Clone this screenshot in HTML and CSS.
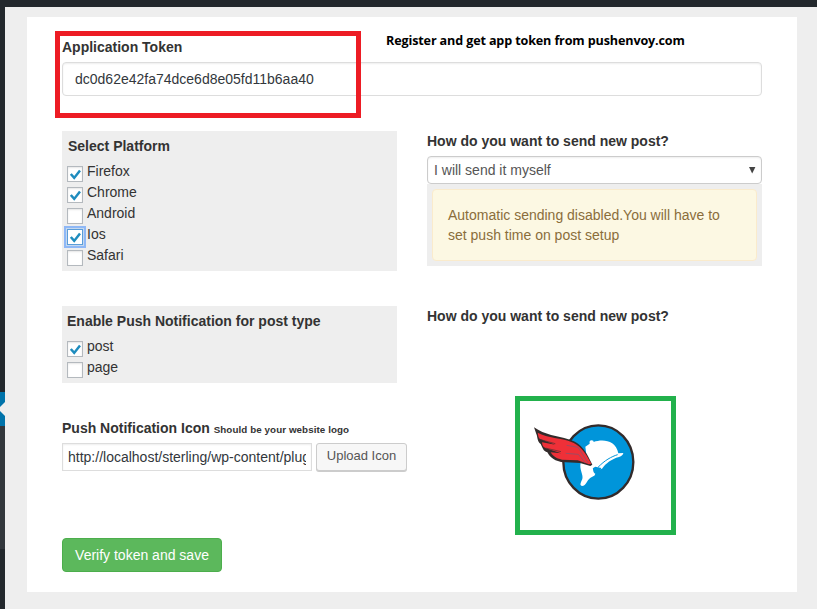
FILE: index.html
```html
<!DOCTYPE html>
<html lang="en">
<head>
<meta charset="utf-8">
<title>Push Envoy settings</title>
<link rel="stylesheet" href="styles.css">
</head>
<body>
<header class="topbar"></header>
<div class="shell">
  <nav class="sidebar"><div class="current"><i></i></div><div class="submenu"></div></nav>
  <main class="card">
    <section class="token">
      <div class="token-head"><label class="label" for="token">Application Token</label><span class="note">Register and get app token from pushenvoy.com</span></div>
      <input id="token" class="token-input" type="text" value="dc0d62e42fa74dce6d8e05fd11b6aa40">
      <div class="highlight"></div>
    </section>
    <div class="grid">
      <section class="panel platforms">
        <h2 class="label">Select Platform</h2>
        <label class="check"><span class="box on"><svg viewBox="0 0 14 14"><path d="M2.8 7 6.2 10.9 12 3.4"/></svg></span>Firefox</label>
        <label class="check"><span class="box on"><svg viewBox="0 0 14 14"><path d="M2.8 7 6.2 10.9 12 3.4"/></svg></span>Chrome</label>
        <label class="check"><span class="box"></span>Android</label>
        <label class="check"><span class="box on focus"><svg viewBox="0 0 14 14"><path d="M2.8 7 6.2 10.9 12 3.4"/></svg></span>Ios</label>
        <label class="check"><span class="box"></span>Safari</label>
      </section>
      <section class="send">
        <h2 class="label">How do you want to send new post?</h2>
        <div class="select"><span>I will send it myself</span><svg width="7" height="7" viewBox="0 0 7 7"><path d="M0 0h6.4L3.2 6.5z"/></svg></div>
        <div class="alert-wrap"><div class="alert">Automatic sending disabled.You will have to<br>set push time on post setup</div></div>
      </section>
    </div>
    <div class="grid second">
      <section class="panel types">
        <h2 class="label">Enable Push Notification for post type</h2>
        <label class="check"><span class="box on"><svg viewBox="0 0 14 14"><path d="M2.8 7 6.2 10.9 12 3.4"/></svg></span>post</label>
        <label class="check"><span class="box"></span>page</label>
      </section>
      <section class="send">
        <h2 class="label">How do you want to send new post?</h2>
      </section>
    </div>
    <div class="grid bottom">
      <section class="icon-field">
        <h2 class="label icon-label">Push Notification Icon <small>Should be your website logo</small></h2>
        <div class="row"><input class="url" type="text" value="http://localhost/sterling/wp-content/plugins"><button class="upload">Upload Icon</button></div>
        <button class="save">Verify token and save</button>
      </section>
      <div class="logo">
        <svg width="151" height="129" viewBox="45 33 453 387">
          <ellipse cx="280" cy="216" rx="105" ry="110" fill="#0095da" stroke="#332b2b" stroke-width="7"/>
          <path fill="#fff" d="M241 170 254 161Q252 151 260 151 267 152 266 156C292 147 332 149 340 190L355 189Q354 197 342 201C319 207 303 220 291 236L282 239 274 233 264 237Q265 250 271 251 271 257 262 260C246 266 244 288 231 288 222 286 229 275 232 267 236 254 222 238 227 219L247 216Z"/>
          <path fill="none" stroke="#0095da" stroke-width="3" d="M279 232C299 211 319 200 338 194"/>
          <path fill="#0095da" d="M263 235 271 230 289 234 284 244 270 246Z"/>
          <path fill="#332b2b" d="M87 112C119 135 158 138 190 148 226 159 240 177 262 224L256 228 225 219 168 216C142 210 134 199 127 187 115 184 112 172 107 162 96 155 98 140 94 132Z"/>
          <path fill="#ee3038" d="M98 128C128 145 171 143 197 155 223 164 240 184 259 221L252 223 218 211 171 209C153 206 143 197 137 187L168 190 121 174C112 170 112 162 111 157L151 164 107 148C99 144 100 135 98 128Z"/>
          <path fill="none" stroke="#493032" stroke-width="2" d="M107 149 151 161M121 174 168 185"/>
          <path fill="none" stroke="#8a526b" stroke-width="2.5" d="M185 166 219 172 249 218M182 190 220 193 241 219"/>
        </svg>
      </div>
    </div>
  </main>
</div>
</body>
</html>
```
FILE: styles.css
```css
* { box-sizing: border-box; }
body { margin: 0; height: 609px; overflow: hidden; background: #eee; color: #333; font: 14px/20px "Liberation Sans", Arial, sans-serif; }
.topbar { height: 7px; background: #23282d; }
.shell { display: flex; height: 602px; }
.sidebar { width: 5px; background: #23282d; padding-top: 385px; }
.current { height: 34px; background: #0073aa; display: flex; align-items: center; overflow: hidden; }
.current i { flex: none; border: 8px solid transparent; border-right-color: #eee; margin-left: -10px; }
.submenu { height: 123px; background: #32373c; }
.card { width: 770px; height: 575px; margin: 10px 0 0 22px; padding: 20px 35px 0; background: #fff; }
.label { display: block; margin: 0; font-size: 14px; line-height: 20px; font-weight: bold; white-space: nowrap; }
.token { position: relative; height: 94px; }
.token-head { display: flex; height: 25px; }
.token-head .label { width: 324px; }
.note { margin-top: -6px; color: #000; font: bold 12.6px/20px "Open Sans", sans-serif; letter-spacing: -.14px; white-space: nowrap; }
.token-input { display: block; width: 700px; height: 34px; padding: 6px 12px; border: 1px solid #ddd; border-radius: 4px; background: #fff; box-shadow: inset 0 1px 2px rgba(0,0,0,.07); color: #32373c; font: 14px/20px "Liberation Sans", Arial, sans-serif; }
.highlight { position: absolute; left: -7px; top: -6px; width: 306px; height: 87px; border: 5px solid #ed1c24; }
.grid { display: grid; grid-template-columns: 335px 335px; gap: 30px; height: 175px; align-items: start; }
.panel { background: #eee; padding: 5px; }
.platforms { height: 140px; }
.types { height: 77px; }
.platforms .label { padding-left: 1px; }
.panel .label { margin-bottom: 5px; }
.check { display: flex; height: 21px; line-height: 21px; }
.box { width: 16px; height: 16px; margin: 5px 4px 0 0; border: 1px solid #b4b9be; background: #fff; box-shadow: inset 0 1px 2px rgba(0,0,0,.1); }
.box svg { display: block; width: 14px; height: 14px; fill: none; stroke: #1e8cbe; stroke-width: 2.5; }
.focus { border-color: #5b9dd9; box-shadow: 0 0 0 1px #c5d8ee, 0 0 0 3px #8fb8f6; }
.select { display: flex; justify-content: space-between; height: 28px; margin-top: 5px; padding: 3px 5px 3px 6px; border: 1px solid #ccc; border-radius: 4px; box-shadow: inset 0 1px 2px rgba(0,0,0,.07); color: #555; }
.select svg { margin-top: 7px; fill: #444; }
.alert-wrap { padding: 5px; background: #eee; height: 82px; }
.alert { height: 72px; padding: 15px; border: 1px solid #faebcc; border-radius: 4px; background: #fcf8e3; color: #8a6d3b; }
.second { height: 90px; }
.bottom { height: 190px; }
.icon-field { padding-top: 22px; }
.icon-label { height: 20px; }
.label small { font-size: 9.8px; line-height: 1; letter-spacing: .08px; }
.row { display: flex; gap: 4px; margin-top: 5px; }
.url { flex: none; width: 250px; height: 28px; padding: 3px 5px; border: 1px solid #ddd; background: #fff; box-shadow: inset 0 1px 2px rgba(0,0,0,.07); color: #32373c; font: 14px/20px "Liberation Sans", Arial, sans-serif; }
.upload { flex: none; margin-right: -10px; width: 91px; height: 28px; padding: 0 0 2px; border: 1px solid #ccc; border-radius: 3px; background: #f7f7f7; box-shadow: 0 1px 0 #ccc; color: #555; font: 13px/20px "Liberation Sans", Arial, sans-serif; }
.save { display: block; width: 160px; height: 34px; margin-top: 67px; padding: 0; border: 1px solid #4cae4c; border-radius: 4px; background: #5cb85c; color: #fff; font: 14px/20px "Liberation Sans", Arial, sans-serif; }
.logo { width: 161px; height: 139px; margin-left: 88px; border: 5px solid #22b14c; background: #fff; }
.logo svg { display: block; }
```
